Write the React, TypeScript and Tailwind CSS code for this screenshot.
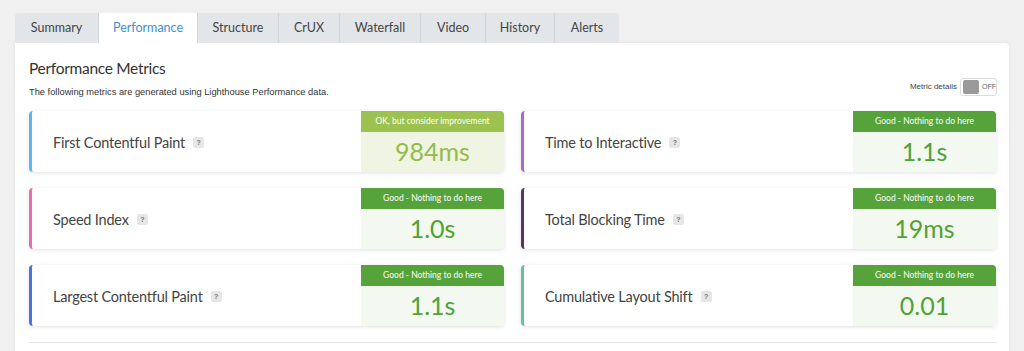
const tabs = ["Summary", "Performance", "Structure", "CrUX", "Waterfall", "Video", "History", "Alerts"];

const tabWidths: Record<string, string> = {
  Summary: "w-[84px]",
  Performance: "w-[99px]",
  Structure: "w-[81px]",
  CrUX: "w-[61px]",
  Waterfall: "w-[81px]",
  Video: "w-[65px]",
  History: "w-[69px]",
  Alerts: "w-[64px]",
};

type Metric = {
  name: string;
  value: string;
  grade: "ok" | "good";
  border: string;
};

const metrics: Metric[] = [
  { name: "First Contentful Paint", value: "984ms", grade: "ok", border: "border-l-[#5bb6f4]" },
  { name: "Time to Interactive", value: "1.1s", grade: "good", border: "border-l-[#a86bcc]" },
  { name: "Speed Index", value: "1.0s", grade: "good", border: "border-l-[#e46fa9]" },
  { name: "Total Blocking Time", value: "19ms", grade: "good", border: "border-l-[#56355f]" },
  { name: "Largest Contentful Paint", value: "1.1s", grade: "good", border: "border-l-[#4a72e4]" },
  { name: "Cumulative Layout Shift", value: "0.01", grade: "good", border: "border-l-[#62c29c]" },
];

const HelpBadge = () => (
  <span className="ml-[8px] inline-flex h-[11px] w-[11px] items-center justify-center rounded-[2px] bg-[#e6e6e6] text-[7px] font-bold leading-none text-[#777] font-['Liberation_Sans',sans-serif]">
    ?
  </span>
);

const MetricCard = ({ metric }: { metric: Metric }) => {
  const ok = metric.grade === "ok";
  return (
    <div className={`flex h-[61px] overflow-hidden rounded-[4px] border-l-[3px] bg-white shadow-[0_1px_4px_rgba(0,0,0,0.12)] ${metric.border}`}>
      <div className="flex flex-1 items-center pl-[21px] pt-[2px] text-[14.5px] tracking-[-0.2px] text-[#444] font-['Lato',sans-serif]">
        {metric.name}
        <HelpBadge />
      </div>
      <div className={`flex w-[143px] flex-col ${ok ? "bg-[#eff5e2]" : "bg-[#f3f9f0]"}`}>
        <div className={`flex h-[21px] items-center justify-center text-[8.5px] text-white font-['Lato',sans-serif] ${ok ? "bg-[#9ec24f]" : "bg-[#56a33b]"}`}>
          {ok ? "OK, but consider improvement" : "Good - Nothing to do here"}
        </div>
        <div className={`flex flex-1 items-center justify-center pb-[2px] text-[25px] leading-none font-['Lato',sans-serif] ${ok ? "text-[#95bb4a]" : "text-[#4fa233]"}`}>
          {metric.value}
        </div>
      </div>
    </div>
  );
};

export default function App() {
  return (
    <div className="h-[351px] w-[1024px] overflow-hidden bg-[#f0f0f0] pl-[15px] pt-[13px]">
      <div className="w-[994px]">
        {/* Tabs */}
        <div className="flex h-[30px]">
          {tabs.map((tab) => {
            const active = tab === "Performance";
            return (
              <div
                key={tab}
                className={`flex h-full items-center justify-center border-r border-[#d2d6da] text-[12.5px] font-['Lato',sans-serif] ${tabWidths[tab]} ${
                  active ? "bg-white text-[#3f8fd6]" : "bg-[#e3e6e9] text-[#444]"
                } ${tab === "Summary" ? "rounded-tl-[3px]" : ""} ${tab === "Alerts" ? "rounded-tr-[3px] border-r-0" : ""}`}
              >
                {tab}
              </div>
            );
          })}
        </div>

        {/* Panel */}
        <div className="h-[320px] rounded-tr-[4px] bg-white px-[14px] pt-[14px] pr-[12px] shadow-[0_0_3px_rgba(0,0,0,0.08)]">
          <div className="flex items-end justify-between">
            <div>
              <h2 className="text-[15.5px] leading-[22px] tracking-[-0.3px] text-[#333] font-['Lato',sans-serif]">Performance Metrics</h2>
              <p className="mt-[6px] text-[9.3px] leading-[14px] text-[#333] font-['Liberation_Sans',sans-serif]">
                The following metrics are generated using Lighthouse Performance data.
              </p>
            </div>
            <div className="mb-[3px] flex items-center gap-[3px]">
              <span className="text-[8px] text-[#444] font-['Liberation_Sans',sans-serif]">Metric details</span>
              <div className="flex h-[18px] w-[37px] items-center rounded-[3px] border border-[#ddd] bg-white pl-[2px]">
                <span className="h-[14px] w-[16px] rounded-[2px] bg-[#9a9a9a]" />
                <span className="ml-[3px] text-[7px] text-[#666] font-['Liberation_Sans',sans-serif]">OFF</span>
              </div>
            </div>
          </div>

          <div className="mt-[12px] grid grid-cols-2 gap-x-[17px] gap-y-[16px] pr-[1px]">
            {metrics.map((m) => (
              <MetricCard key={m.name} metric={m} />
            ))}
          </div>

          <div className="mt-[16px] border-t border-[#e6e6e6]" />
        </div>
      </div>
    </div>
  );
}
